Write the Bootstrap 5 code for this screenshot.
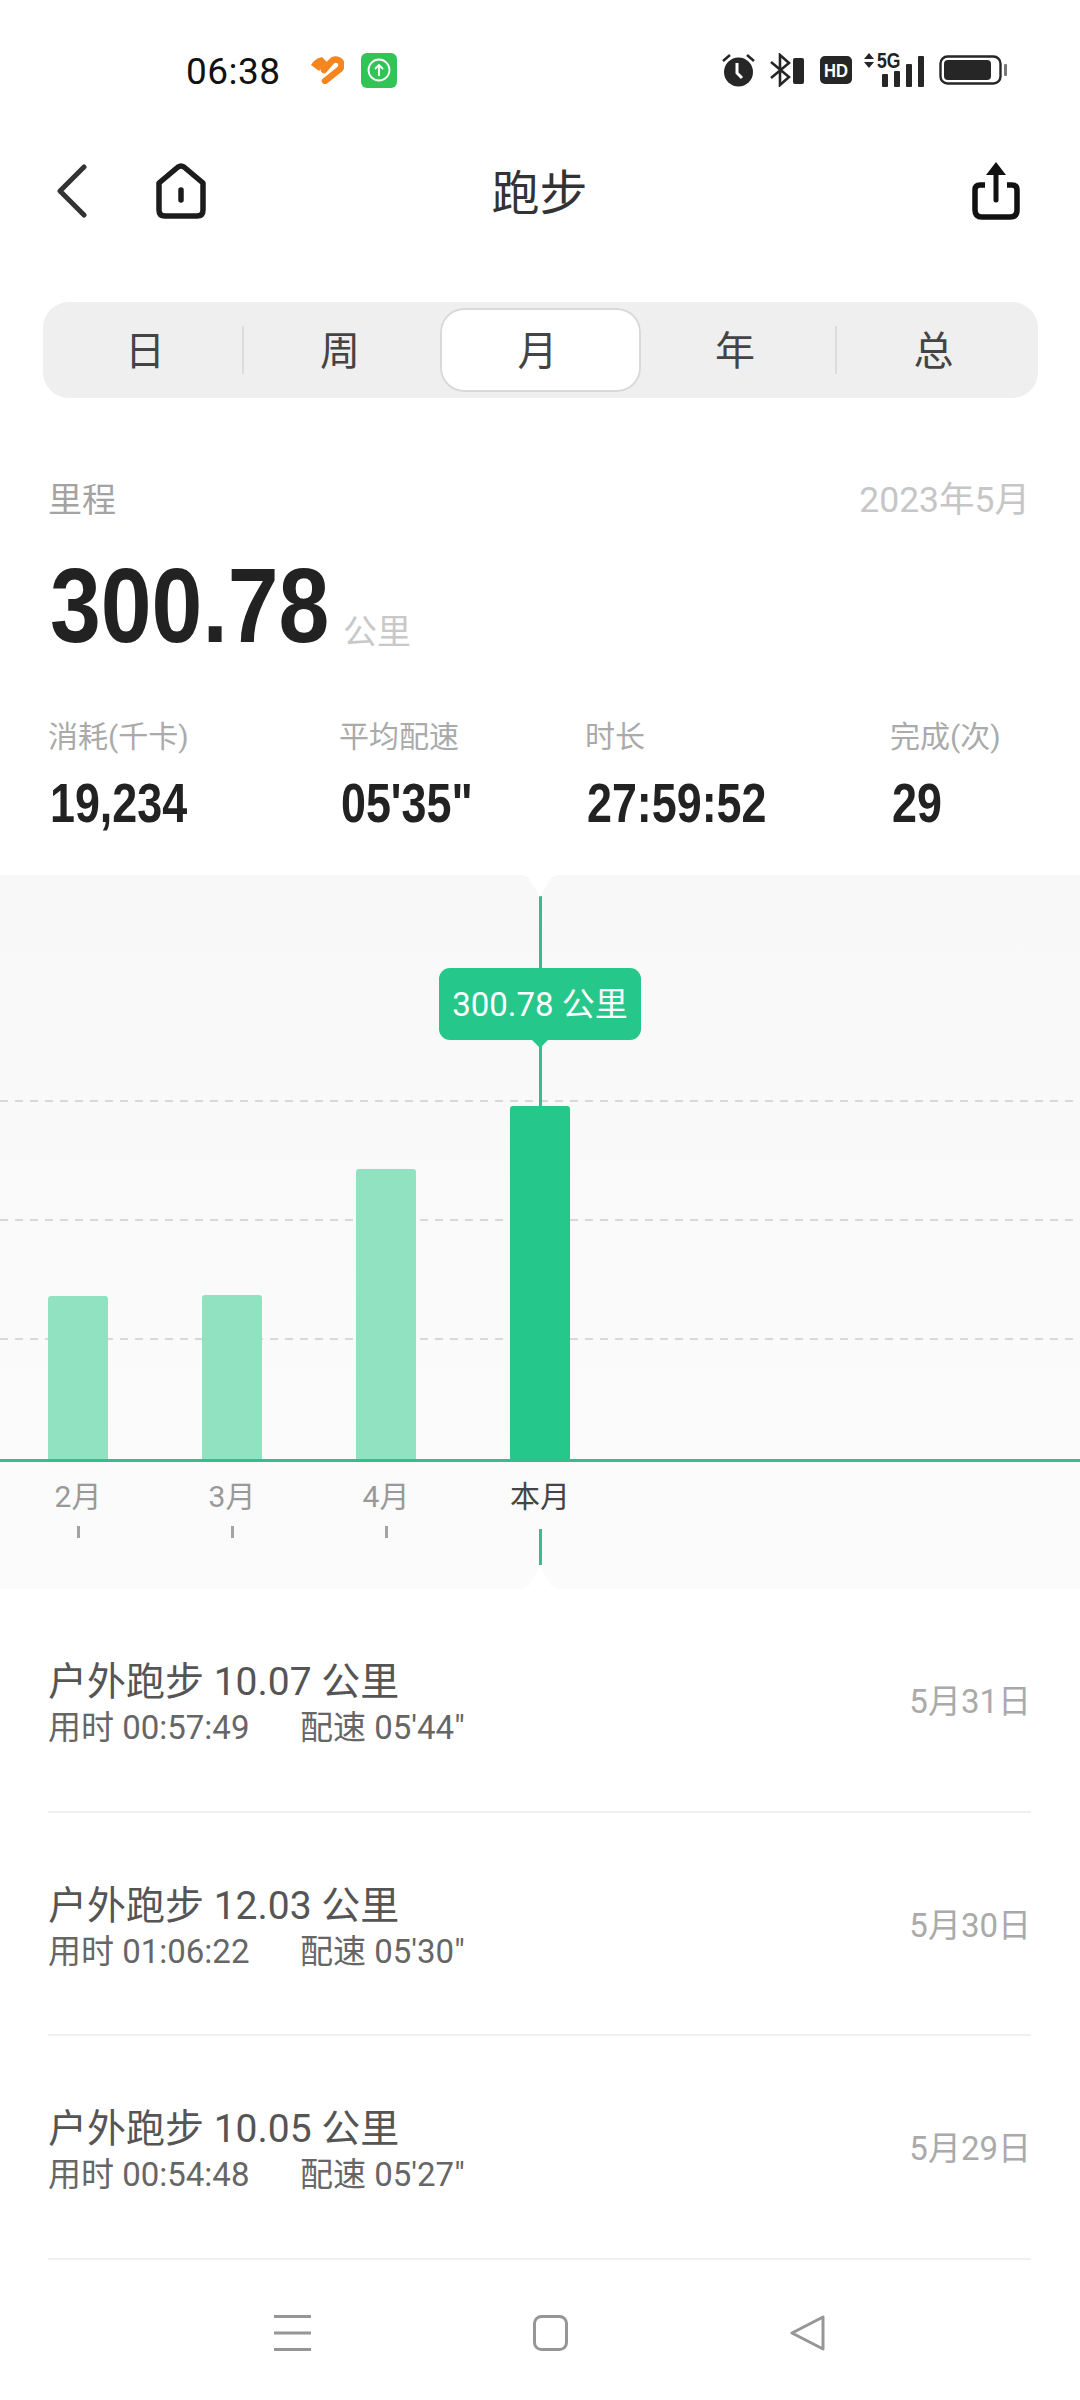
<!DOCTYPE html>
<html lang="zh-CN">
<head>
  <meta charset="UTF-8">
  <meta name="viewport" content="width=device-width, initial-scale=1.0">
  <title>跑步</title>
  <link href="https://cdn.jsdelivr.net/npm/bootstrap@5.3.0/dist/css/bootstrap.min.css" rel="stylesheet">
  <style>
    body {
      background: #fff;
      font-family: Roboto, "Noto Sans CJK SC", sans-serif;
      color: #333;
    }
    .phone {
      width: 1080px;
      height: 2400px;
      overflow: hidden;
    }
    .status-row {
      height: 140px;
      padding: 0 73px 0 186px;
    }
    .clock {
      font-size: 37px;
      letter-spacing: .5px;
      color: #111;
      width: 124px;
      padding-top: 3px;
    }
    .app-badge {
      width: 36px;
      height: 35px;
      border-radius: 6px;
      background: #33c458;
      margin-left: 17px;
    }
    .status-icons {
      gap: 15px;
    }
    .net-wrap {
      width: 60px;
      height: 34px;
      margin-left: -3px;
    }
    .net-label {
      position: absolute;
      left: 13px;
      top: -3px;
      font: bold 22px/22px "Liberation Sans", sans-serif;
      transform: scaleX(.8);
      transform-origin: left;
      color: #222;
    }
    .net-wrap svg {
      position: absolute;
      left: 0;
      top: 0;
    }
    .title-row {
      height: 102px;
      display: grid;
      grid-template-columns: 1fr auto 1fr;
      align-items: center;
      padding: 0 58px 0 57px;
    }
    .home-ico {
      margin-left: 68px;
    }
    .share-ico {
      margin-right: 2px;
    }
    .page-title {
      font-size: 48px;
      line-height: 60px;
      padding-top: 5px;
      color: #333;
    }
    .seg-bar {
      display: grid;
      grid-template-columns: 199px 198px 201px 194px 1fr;
      height: 96px;
      margin: 60px 42px 0 43px;
      background: #efefef;
      border-radius: 26px;
      align-items: center;
    }
    .seg-bar .seg-item {
      position: relative;
      height: 84px;
      padding: 0 6px 0 0;
      font-size: 40px;
      line-height: 87px;
      text-align: center;
      color: #444;
    }
    .seg-bar .seg-item:nth-child(1) {
      padding: 0 0 0 5px;
    }
    .seg-bar .seg-item:nth-child(2) {
      padding: 0 2px 0 0;
    }
    .seg-bar .seg-item.active {
      background: #fff;
      color: #444;
      border-radius: 24px;
      box-shadow: 0 0 0 2px #d9d9d9 inset;
    }
    .seg-item.has-rule::after {
      content: "";
      position: absolute;
      right: -2px;
      top: 18px;
      height: 48px;
      width: 2px;
      background: #dcdcdc;
    }
    .summary {
      padding: 82px 50px 0 48px;
    }
    .sum-head {
      line-height: 40px;
      font-size: 34px;
      color: #a3a3a3;
    }
    .sum-date {
      font-size: 35.5px;
      color: #c6c6c6;
    }
    .big-line {
      margin-top: 36px;
      height: 100px;
    }
    .big-num {
      display: inline-block;
      width: 293px;
      margin-left: 2px;
      font: bold 105px/100px "Liberation Sans", sans-serif;
      transform: scaleX(.87);
      transform-origin: left;
      color: #222;
    }
    .big-unit {
      font-size: 34px;
      line-height: 48px;
      color: #c8c8c8;
    }
    .stat-grid {
      display: grid;
      grid-template-columns: 291px 246px 305px auto;
      margin-top: 61px;
    }
    .stat-label {
      font-size: 30px;
      line-height: 40px;
      color: #aaa;
    }
    .stat-value {
      margin: 16px 0 0 2px;
      font: bold 55px/60px "Liberation Sans", sans-serif;
      transform: scaleX(.815);
      transform-origin: left;
      color: #222;
    }
    .chart-box {
      position: relative;
      height: 714px;
      margin-top: 42px;
      background: linear-gradient(#f8f8f8, #fbfbfb);
    }
    .notch {
      position: absolute;
      left: 520px;
      width: 40px;
      height: 22px;
      z-index: 3;
    }
    .notch.at-top { top: 0; }
    .notch.at-bottom { bottom: 0; }
    .grid-dash {
      position: absolute;
      left: 0;
      right: 0;
      height: 2px;
      background: repeating-linear-gradient(90deg, #d8d8d8 0 8px, transparent 8px 15px);
    }
    .cursor-line {
      position: absolute;
      left: 539px;
      top: 21px;
      width: 3px;
      height: 210px;
      background: #35bd8e;
    }
    .chart-tip {
      position: absolute;
      left: 439px;
      top: 93px;
      width: 202px;
      height: 72px;
      border-radius: 11px;
      background: #26c78b;
      color: #fff;
      font-size: 33px;
      line-height: 74px;
      text-align: center;
    }
    .chart-tip::after {
      content: "";
      position: absolute;
      left: 92px;
      bottom: -8px;
      width: 18px;
      height: 9px;
      background: #26c78b;
      clip-path: polygon(0 0, 100% 0, 50% 100%);
    }
    .plot {
      position: relative;
      height: 587px;
      padding-left: 48px;
      gap: 94px;
      border-bottom: 3px solid #35bd8e;
    }
    .bar-col {
      width: 60px;
      background: #90e2c0;
      border-radius: 3px 3px 0 0;
    }
    .bar-col.is-now {
      background: #26c78b;
    }
    .axis-row {
      padding: 15px 0 0 48px;
      gap: 94px;
    }
    .axis-col {
      width: 60px;
    }
    .axis-name {
      font-size: 30px;
      line-height: 40px;
      color: #999;
      white-space: nowrap;
    }
    .axis-tick {
      width: 3px;
      height: 12px;
      margin-top: 9px;
      background: #a3a3a3;
    }
    .axis-col.is-now .axis-name {
      color: #444;
    }
    .axis-col.is-now .axis-tick {
      height: 36px;
      margin-top: 12px;
      background: #35bd8e;
    }
    .run-list {
      margin: 0 49px 0 48px;
    }
    .run-list > .run-item,
    .run-list > .run-item:last-child {
      height: 223.5px;
      padding: 0;
      background: transparent;
      border: 0 solid #f0f0f0;
      border-bottom-width: 2px;
    }
    .run-title {
      font-size: 39px;
      line-height: 48px;
      padding-top: 7px;
      color: #555;
    }
    .run-sub {
      margin-top: 2px;
      font-size: 33px;
      line-height: 40px;
      color: #666;
    }
    .run-sub span {
      display: inline-block;
      width: 252px;
    }
    .run-date {
      padding-top: 4px;
      font-size: 33px;
      color: #aaa;
    }
    .nav-keys {
      height: 146px;
      padding-left: 274px;
      gap: 222px;
    }
  </style>
</head>
<body>
  <div class="phone">

    <div class="status-row d-flex align-items-center">
      <div class="clock">06:38</div>
      <svg width="34" height="28" viewBox="0 0 34 28">
        <path d="M1 9Q4 3 12 1L17 6 9 15Z" fill="#f5861f"/>
        <path d="M14 14 21 6C26 0 35 6 30 13L15 25" stroke="#f5861f" stroke-width="6.5" stroke-linecap="round" fill="none"/>
      </svg>
      <div class="app-badge d-flex align-items-center justify-content-center">
        <svg width="24" height="24" viewBox="0 0 24 24" fill="none" stroke="#fff" stroke-width="1.8">
          <circle cx="12" cy="12" r="10.5"/>
          <path d="M12 18V7M8 11l4-4 4 4"/>
        </svg>
      </div>
      <div class="status-icons ms-auto d-flex align-items-center">
        <svg width="33" height="34" viewBox="0 0 33 34">
          <circle cx="16.5" cy="19" r="14.5" fill="#262626"/>
          <path d="M15 10v10l5 5" stroke="#fff" stroke-width="3" fill="none"/>
          <path d="M1 8 8 2M32 8 25 2" stroke="#262626" stroke-width="2.5"/>
        </svg>
        <svg width="35" height="34" viewBox="0 0 35 34">
          <path d="M1 9 19 24 10 32V2L19 10 1 25" stroke="#262626" stroke-width="2.6" fill="none"/>
          <rect x="23" y="5" width="11" height="26" rx="2" fill="#262626"/>
        </svg>
        <svg width="32" height="28" viewBox="0 0 32 28">
          <rect width="32" height="28" rx="5" fill="#262626"/>
          <text x="16" y="21" text-anchor="middle" font-family="Liberation Sans, sans-serif" font-weight="700" font-size="19" textLength="24" lengthAdjust="spacingAndGlyphs" fill="#fff">HD</text>
        </svg>
        <div class="net-wrap position-relative">
          <svg width="60" height="34" viewBox="0 0 60 34">
            <path d="M0 6 5 0 10 6ZM0 9H10L5 15Z" fill="#262626"/>
            <rect x="18" y="21" width="6" height="13" rx="1" fill="#262626"/>
            <rect x="30" y="18" width="6" height="16" rx="1" fill="#262626"/>
            <rect x="42" y="11" width="6" height="23" rx="1" fill="#262626"/>
            <rect x="54" y="3" width="6" height="31" rx="1" fill="#262626"/>
          </svg>
          <span class="net-label">5G</span>
        </div>
        <svg width="68" height="30" viewBox="0 0 68 30">
          <rect x="1.5" y="1.5" width="60" height="27" rx="7" fill="none" stroke="#262626" stroke-width="2.4"/>
          <rect x="5" y="5" width="47" height="20" rx="4" fill="#262626"/>
          <rect x="65" y="9" width="3" height="12" rx="1" fill="#777"/>
        </svg>
      </div>
    </div>

    <div class="title-row">
      <div class="d-flex align-items-center">
        <svg width="30" height="54" viewBox="0 0 30 54" fill="none" stroke="#333" stroke-width="5" stroke-linecap="round" stroke-linejoin="round">
          <path d="M27 3 3 27 27 51"/>
        </svg>
        <svg width="52" height="56" viewBox="0 0 52 56" fill="none" class="home-ico">
          <path d="M4 20 23 4Q26 2 29 4L48 20V47Q48 53 42 53H10Q4 53 4 47Z" stroke="#1c1c1c" stroke-width="5.5" stroke-linejoin="round"/>
          <path d="M26 27V37" stroke="#1c1c1c" stroke-width="5.5" stroke-linecap="round"/>
        </svg>
      </div>
      <div class="page-title">跑步</div>
      <div class="d-flex justify-content-end">
        <svg width="48" height="58" viewBox="0 0 48 58" fill="none" stroke="#111" stroke-width="5" class="share-ico">
          <path d="M13 23H8Q3 23 3 28V48Q3 55 10 55H38Q45 55 45 48V28Q45 23 40 23H35" stroke-width="5.5"/>
          <path d="M24 8V38" stroke-linecap="round"/>
          <path d="M24 0 34 13H14Z" fill="#111" stroke="none"/>
        </svg>
      </div>
    </div>

    <nav class="nav seg-bar">
      <a class="nav-link seg-item has-rule" href="#">日</a>
      <a class="nav-link seg-item" href="#">周</a>
      <a class="nav-link seg-item active" href="#">月</a>
      <a class="nav-link seg-item has-rule" href="#">年</a>
      <a class="nav-link seg-item" href="#">总</a>
    </nav>

    <div class="summary">
      <div class="sum-head d-flex justify-content-between">
        <span>里程</span>
        <span class="sum-date">2023年5月</span>
      </div>
      <div class="big-line d-flex align-items-end">
        <span class="big-num">300.78</span>
        <span class="big-unit">公里</span>
      </div>
      <div class="stat-grid">
        <div>
          <div class="stat-label">消耗(千卡)</div>
          <div class="stat-value">19,234</div>
        </div>
        <div>
          <div class="stat-label">平均配速</div>
          <div class="stat-value">05'35"</div>
        </div>
        <div>
          <div class="stat-label">时长</div>
          <div class="stat-value">27:59:52</div>
        </div>
        <div>
          <div class="stat-label">完成(次)</div>
          <div class="stat-value">29</div>
        </div>
      </div>
    </div>

    <div class="chart-box">
      <svg class="notch at-top" viewBox="0 0 40 22"><path d="M0 0C6 0 8 2 10 5L20 22 30 5C32 2 34 0 40 0Z" fill="#fff"/></svg>
      <div class="plot d-flex align-items-end">
        <div class="grid-dash" style="top: 225px"></div>
        <div class="grid-dash" style="top: 344px"></div>
        <div class="grid-dash" style="top: 463px"></div>
        <div class="cursor-line"></div>
        <div class="chart-tip">300.78 公里</div>
        <div class="bar-col position-relative" style="height: 163px"></div>
        <div class="bar-col position-relative" style="height: 164px"></div>
        <div class="bar-col position-relative" style="height: 290px"></div>
        <div class="bar-col is-now position-relative" style="height: 353px"></div>
      </div>
      <div class="axis-row d-flex">
        <div class="axis-col d-flex flex-column align-items-center">
          <div class="axis-name">2月</div>
          <div class="axis-tick"></div>
        </div>
        <div class="axis-col d-flex flex-column align-items-center">
          <div class="axis-name">3月</div>
          <div class="axis-tick"></div>
        </div>
        <div class="axis-col d-flex flex-column align-items-center">
          <div class="axis-name">4月</div>
          <div class="axis-tick"></div>
        </div>
        <div class="axis-col is-now d-flex flex-column align-items-center">
          <div class="axis-name">本月</div>
          <div class="axis-tick"></div>
        </div>
      </div>
      <svg class="notch at-bottom" viewBox="0 0 40 22"><path d="M0 22C6 22 8 20 10 17L20 0 30 17C32 20 34 22 40 22Z" fill="#fff"/></svg>
    </div>

    <div class="list-group list-group-flush run-list">
      <div class="list-group-item run-item d-flex align-items-center justify-content-between">
        <div>
          <div class="run-title">户外跑步 10.07 公里</div>
          <div class="run-sub"><span>用时 00:57:49</span>配速 05'44"</div>
        </div>
        <div class="run-date">5月31日</div>
      </div>
      <div class="list-group-item run-item d-flex align-items-center justify-content-between">
        <div>
          <div class="run-title">户外跑步 12.03 公里</div>
          <div class="run-sub"><span>用时 01:06:22</span>配速 05'30"</div>
        </div>
        <div class="run-date">5月30日</div>
      </div>
      <div class="list-group-item run-item d-flex align-items-center justify-content-between">
        <div>
          <div class="run-title">户外跑步 10.05 公里</div>
          <div class="run-sub"><span>用时 00:54:48</span>配速 05'27"</div>
        </div>
        <div class="run-date">5月29日</div>
      </div>
    </div>

    <div class="nav-keys d-flex align-items-center">
      <svg width="37" height="36" viewBox="0 0 37 36" fill="#969696">
        <rect y="0" width="37" height="3"/>
        <rect y="16.5" width="37" height="3"/>
        <rect y="33" width="37" height="3"/>
      </svg>
      <svg width="35" height="36" viewBox="0 0 35 36" fill="none" stroke="#969696" stroke-width="3">
        <rect x="1.5" y="1.5" width="32" height="33" rx="7"/>
      </svg>
      <svg width="35" height="36" viewBox="0 0 35 36" fill="none" stroke="#969696" stroke-width="3" stroke-linejoin="round">
        <path d="M2 18 33 2V34Z"/>
      </svg>
    </div>

  </div>
  <script src="https://cdn.jsdelivr.net/npm/bootstrap@5.3.0/dist/js/bootstrap.bundle.min.js"></script>
</body>
</html>
